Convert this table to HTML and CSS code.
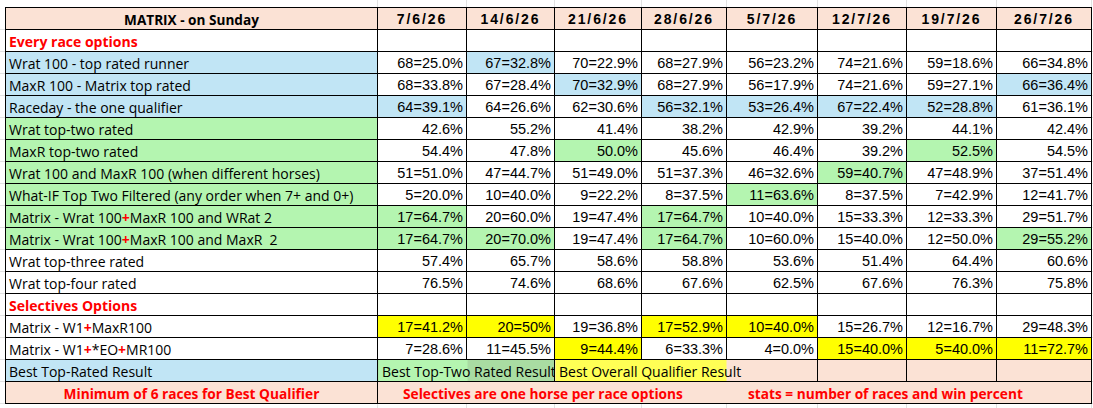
FILE: index.html
```html
<!DOCTYPE html>
<html>
<head>
<meta charset="utf-8">
<link rel="stylesheet" href="styles.css">
</head>
<body>
<div class="sheet">
  <div class="strip">
    <span class="s0"></span><span class="s1"></span><span class="s2"></span><span class="s3"></span><span class="s4"></span><span class="s5"></span><span class="s6"></span><span class="s7"></span><span class="s8"></span>
  </div>
  <table class="matrix">
    <colgroup>
      <col class="c0"><col class="c1"><col class="c2"><col class="c3"><col class="c4"><col class="c5"><col class="c6"><col class="c7"><col class="c8">
    </colgroup>
    <tr class="head">
      <th class="title">MATRIX - on Sunday</th>
      <th>7/6/26</th><th>14/6/26</th><th>21/6/26</th><th>28/6/26</th><th>5/7/26</th><th>12/7/26</th><th>19/7/26</th><th>26/7/26</th>
    </tr>
    <tr>
      <td class="lbl red">Every race options</td>
      <td></td><td></td><td></td><td></td><td></td><td></td><td></td><td></td>
    </tr>
    <tr>
      <td class="lbl blue">Wrat 100 - top rated runner</td>
      <td class="n">68=25.0%</td><td class="n blue">67=32.8%</td><td class="n">70=22.9%</td><td class="n">68=27.9%</td><td class="n">56=23.2%</td><td class="n">74=21.6%</td><td class="n">59=18.6%</td><td class="n">66=34.8%</td>
    </tr>
    <tr>
      <td class="lbl blue">MaxR 100 - Matrix top rated</td>
      <td class="n">68=33.8%</td><td class="n">67=28.4%</td><td class="n blue">70=32.9%</td><td class="n">68=27.9%</td><td class="n">56=17.9%</td><td class="n">74=21.6%</td><td class="n">59=27.1%</td><td class="n blue">66=36.4%</td>
    </tr>
    <tr>
      <td class="lbl blue">Raceday - the one qualifier</td>
      <td class="n blue">64=39.1%</td><td class="n">64=26.6%</td><td class="n">62=30.6%</td><td class="n blue">56=32.1%</td><td class="n blue">53=26.4%</td><td class="n blue">67=22.4%</td><td class="n blue">52=28.8%</td><td class="n">61=36.1%</td>
    </tr>
    <tr>
      <td class="lbl green">Wrat top-two rated</td>
      <td class="n">42.6%</td><td class="n">55.2%</td><td class="n">41.4%</td><td class="n">38.2%</td><td class="n">42.9%</td><td class="n">39.2%</td><td class="n">44.1%</td><td class="n">42.4%</td>
    </tr>
    <tr>
      <td class="lbl green">MaxR top-two rated</td>
      <td class="n">54.4%</td><td class="n">47.8%</td><td class="n green">50.0%</td><td class="n">45.6%</td><td class="n">46.4%</td><td class="n">39.2%</td><td class="n green">52.5%</td><td class="n">54.5%</td>
    </tr>
    <tr>
      <td class="lbl green">Wrat 100 and MaxR 100 (when different horses)</td>
      <td class="n">51=51.0%</td><td class="n">47=44.7%</td><td class="n">51=49.0%</td><td class="n">51=37.3%</td><td class="n">46=32.6%</td><td class="n green">59=40.7%</td><td class="n">47=48.9%</td><td class="n">37=51.4%</td>
    </tr>
    <tr>
      <td class="lbl green">What-IF Top Two Filtered (any order when 7+ and 0+)</td>
      <td class="n">5=20.0%</td><td class="n">10=40.0%</td><td class="n">9=22.2%</td><td class="n">8=37.5%</td><td class="n green">11=63.6%</td><td class="n">8=37.5%</td><td class="n">7=42.9%</td><td class="n">12=41.7%</td>
    </tr>
    <tr>
      <td class="lbl green">Matrix - Wrat 100<b class="plus">+</b>MaxR 100 and WRat 2</td>
      <td class="n green">17=64.7%</td><td class="n">20=60.0%</td><td class="n">19=47.4%</td><td class="n green">17=64.7%</td><td class="n">10=40.0%</td><td class="n">15=33.3%</td><td class="n">12=33.3%</td><td class="n">29=51.7%</td>
    </tr>
    <tr>
      <td class="lbl green">Matrix - Wrat 100<b class="plus">+</b>MaxR 100 and MaxR&nbsp; 2</td>
      <td class="n green">17=64.7%</td><td class="n green">20=70.0%</td><td class="n">19=47.4%</td><td class="n green">17=64.7%</td><td class="n">10=60.0%</td><td class="n">15=40.0%</td><td class="n">12=50.0%</td><td class="n green">29=55.2%</td>
    </tr>
    <tr>
      <td class="lbl">Wrat top-three rated</td>
      <td class="n">57.4%</td><td class="n">65.7%</td><td class="n">58.6%</td><td class="n">58.8%</td><td class="n">53.6%</td><td class="n">51.4%</td><td class="n">64.4%</td><td class="n">60.6%</td>
    </tr>
    <tr>
      <td class="lbl">Wrat top-four rated</td>
      <td class="n">76.5%</td><td class="n">74.6%</td><td class="n">68.6%</td><td class="n">67.6%</td><td class="n">62.5%</td><td class="n">67.6%</td><td class="n">76.3%</td><td class="n">75.8%</td>
    </tr>
    <tr>
      <td class="lbl red">Selectives Options</td>
      <td></td><td></td><td></td><td></td><td></td><td></td><td></td><td></td>
    </tr>
    <tr>
      <td class="lbl">Matrix - W1<b class="plus">+</b>MaxR100</td>
      <td class="n yellow">17=41.2%</td><td class="n yellow">20=50%</td><td class="n">19=36.8%</td><td class="n yellow">17=52.9%</td><td class="n yellow">10=40.0%</td><td class="n">15=26.7%</td><td class="n">12=16.7%</td><td class="n">29=48.3%</td>
    </tr>
    <tr>
      <td class="lbl">Matrix - W1<b class="plus">+</b>*EO<b class="plus">+</b>MR100</td>
      <td class="n">7=28.6%</td><td class="n">11=45.5%</td><td class="n yellow">9=44.4%</td><td class="n">6=33.3%</td><td class="n">4=0.0%</td><td class="n yellow">15=40.0%</td><td class="n yellow">5=40.0%</td><td class="n yellow">11=72.7%</td>
    </tr>
    <tr>
      <td class="lbl blue">Best Top-Rated Result</td>
      <td class="lbl legend-two" colspan="2">Best Top-Two Rated Result</td>
      <td class="lbl legend-all" colspan="3">Best Overall Qualifier Result</td>
      <td class="peach"></td><td class="peach"></td><td class="peach"></td>
    </tr>
    <tr class="foot">
      <td class="note center">Minimum of 6 races for Best Qualifier</td>
      <td class="note" colspan="8"><span class="note1">Selectives are one horse per race options</span><span>stats = number of races and win percent</span></td>
    </tr>
  </table>
  <div class="strip">
    <span class="s0"></span><span class="s1"></span><span class="s2"></span><span class="s3"></span><span class="s4"></span><span class="s5"></span><span class="s6"></span><span class="s7"></span><span class="s8"></span>
  </div>
</div>
</body>
</html>
```

FILE: styles.css
```css
html, body {
  margin: 0;
  padding: 0;
  background: #ffffff;
}

.sheet {
  padding-left: 5px;
  width: 1093px;
  height: 408px;
  box-sizing: border-box;
  overflow: hidden;
  background-image: repeating-linear-gradient(to bottom, transparent 0, transparent 21px, #e1e1e1 21px, #e1e1e1 22px);
  background-position: 0 8px;
}

.strip {
  display: flex;
  height: 7px;
  background: #ffffff;
}
.strip span {
  box-sizing: border-box;
  border-right: 1px solid #e1e1e1;
  height: 7px;
}
.s0 { width: 373px; }
.s1 { width: 89px; }
.s2 { width: 88px; }
.s3 { width: 87px; }
.s4 { width: 85px; }
.s5 { width: 91px; }
.s6 { width: 89px; }
.s7 { width: 90px; }
.s8 { width: 95px; }

.matrix {
  border-collapse: collapse;
  table-layout: fixed;
  width: 1087px;
  background: #ffffff;
  font-family: "Liberation Sans", Arial, sans-serif;
  font-size: 14.5px;
  color: #000000;
}
.c0 { width: 372px; }
.c1 { width: 89px; }
.c2 { width: 88px; }
.c3 { width: 87px; }
.c4 { width: 85px; }
.c5 { width: 91px; }
.c6 { width: 89px; }
.c7 { width: 90px; }
.c8 { width: 95px; }

.matrix th,
.matrix td {
  border: 1px solid #000000;
  height: 22px;
  padding: 1px 3px 0 3px;
  box-sizing: border-box;
  line-height: 19px;
  white-space: nowrap;
  overflow: hidden;
  vertical-align: middle;
}

.head th {
  background: #fbe2d5;
  font-weight: bold;
  font-size: 14px;
  letter-spacing: 1.9px;
  text-align: center;
  color: #000000;
  padding-top: 2px;
}
.head th.title {
  font-family: "Open Sans", "Liberation Sans", sans-serif;
  letter-spacing: 0;
  font-size: 13.6px;
  padding-top: 1px;
}

.lbl {
  font-family: "Open Sans", "Liberation Sans", sans-serif;
  font-size: 14px;
  text-align: left;
}
.matrix td.n {
  text-align: right;
  padding-top: 2px;
}
.red {
  color: #ff0000;
  font-weight: bold;
}
.plus {
  color: #ff0000;
  font-weight: bold;
}

.blue { background: #c1e5f5; }
.green { background: #b4f5b0; }
.yellow { background: #ffff00; }
.peach { background: #fbe2d5; }

.matrix td.legend-two {
  padding-left: 4px;
  text-overflow: clip;
  background: linear-gradient(to right, #b4f5b0 0, #b4f5b0 89px, #a9dca2 89px);
}
.matrix td.legend-all {
  padding-left: 4px;
  background: linear-gradient(to right, #ffff55 0, #ffff55 171px, #fbe2d5 171px);
}

.foot td {
  background: #fbe2d5;
}
.note {
  font-family: "Open Sans", "Liberation Sans", sans-serif;
  font-weight: bold;
  color: #ff0000;
  font-size: 13.7px;
}
.center {
  text-align: center;
}
.note1 {
  display: inline-block;
  width: 345px;
  margin-left: 22px;
}
```
